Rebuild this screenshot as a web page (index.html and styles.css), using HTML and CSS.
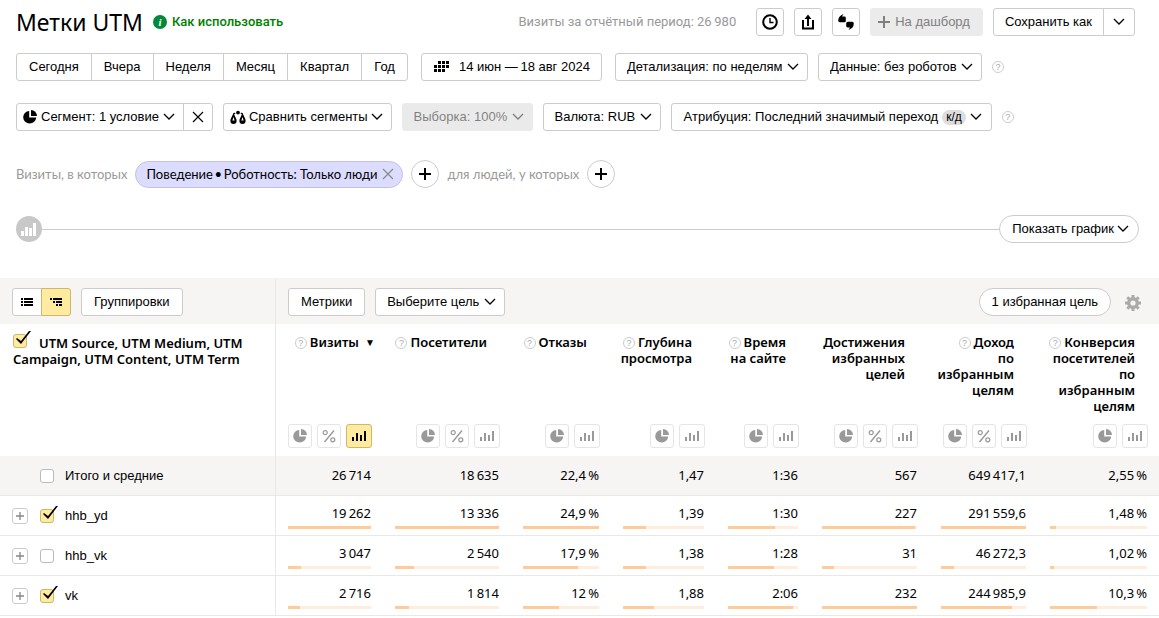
FILE: index.html
```html
<!DOCTYPE html>
<html lang="ru">
  <head>
    <meta charset="UTF-8" />
    <meta name="viewport" content="width=device-width, initial-scale=1.0" />
    <title>Метки UTM</title>
    <link rel="stylesheet" href="styles.css">
  </head>
  <body>
    <!-- Общие иконки -->
    <svg class="sprite" aria-hidden="true">
      <symbol id="chevron" viewBox="0 0 12 8">
        <path d="M1 1l5 5 5-5" fill="none" stroke="currentColor" stroke-width="1.3" />
      </symbol>
      <symbol id="pie" viewBox="0 0 14 14">
        <path d="M6.2 1v6.6h7a6.5 6.3 0 1 1-7-6.6z" fill="currentColor" />
        <path d="M8 0a6.2 6 0 0 1 6 5.9H8z" fill="currentColor" />
      </symbol>
      <symbol id="percent" viewBox="0 0 14 14">
        <path d="M2.5 13L12 1.5" stroke="currentColor" stroke-width="1.4" />
        <circle cx="3.2" cy="3.7" r="2" fill="none" stroke="currentColor" stroke-width="1.2" />
        <circle cx="10.8" cy="10.8" r="2" fill="none" stroke="currentColor" stroke-width="1.2" />
      </symbol>
      <symbol id="bars" viewBox="0 0 14 14">
        <path d="M0 8h2v4H0zM4 4h2v8H4zM8 6h2v6H8zM12 2h2v10h-2z" fill="currentColor" />
      </symbol>
      <symbol id="plus" viewBox="0 0 12 12">
        <path d="M6 0v12M0 6h12" stroke="currentColor" stroke-width="2" />
      </symbol>
      <symbol id="cross" viewBox="0 0 12 12">
        <path d="M1 1l10 10M11 1L1 11" stroke="currentColor" stroke-width="1.2" />
      </symbol>
    </svg>

    <!-- Шапка отчёта -->
    <header class="row header">
      <h1>Метки UTM</h1>
      <a href="#" class="howto"><i class="info">i</i>Как использовать</a>
      <span class="period-total">Визиты за отчётный период: 26&#8201;980</span>
      <button class="btn btn-icon" aria-label="История">
        <svg width="16" height="16" viewBox="0 0 16 16" fill="none" stroke="#000"><circle cx="8" cy="8" r="6.8" stroke-width="2" /><path d="M8 4v4.5h3.5" stroke-width="1.4" /></svg>
      </button>
      <button class="btn btn-icon" aria-label="Экспорт">
        <svg width="14" height="16" viewBox="0 0 14 16" fill="none" stroke="#000" stroke-width="2"><path d="M3 7H2v7.5h10V7h-1M7 12V3" /><path d="M3.6 5L7 .5 10.4 5z" fill="#000" stroke="none" /></svg>
      </button>
      <button class="btn btn-icon" aria-label="Комментарии">
        <svg width="16" height="16" viewBox="0 0 16 16"><path d="M5.500 0L4 2.600H6.300q1.500 0 1.500 1.400v2.800q0 1.500-1.500 1.500H1.800Q.2 8.300 .2 6.500 .2 2 5.500 0zM10.500 16l1.500-2.600H9.700q-1.500 0-1.500-1.400V9.200q0-1.500 1.500-1.500h4.500q1.600 0 1.600 1.800 0 4.500-5.300 6.500z" /></svg>
      </button>
      <button class="btn btn-muted" disabled><svg width="12" height="12"><use href="#plus" /></svg>На дашборд</button>
      <div class="group">
        <button class="btn">Сохранить как</button>
        <button class="btn btn-narrow" aria-label="Ещё варианты"><svg width="12" height="8"><use href="#chevron" /></svg></button>
      </div>
    </header>

    <!-- Период и детализация -->
    <div class="row row-period">
      <div class="group period">
        <button class="btn">Сегодня</button>
        <button class="btn">Вчера</button>
        <button class="btn">Неделя</button>
        <button class="btn">Месяц</button>
        <button class="btn">Квартал</button>
        <button class="btn">Год</button>
      </div>
      <button class="btn dates">
        <svg width="15" height="12" viewBox="0 0 15 12"><path d="M4 0h3v3H4zM8 0h3v3H8zM12 0h3v3h-3zM0 4h3v3H0zM4 4h3v3H4zM8 4h3v3H8zM12 4h3v3h-3zM0 8h3v3H0zM4 8h3v3H4zM8 8h3v3H8z" /></svg>
        14 июн —&#8201;18 авг 2024
      </button>
      <select class="btn select" aria-label="Детализация"><option>Детализация: по неделям</option></select>
      <select class="btn select" aria-label="Данные"><option>Данные: без роботов</option></select>
      <button class="help">?</button>
    </div>

    <!-- Сегменты -->
    <div class="row row-segment">
      <div class="group">
        <button class="btn btn-tight"><svg width="14" height="14"><use href="#pie" /></svg>Сегмент: 1 условие<svg width="12" height="8"><use href="#chevron" /></svg></button>
        <button class="btn btn-close" aria-label="Сбросить сегмент"><svg width="12" height="12"><use href="#cross" /></svg></button>
      </div>
      <button class="btn btn-tight compare">
        <svg width="16" height="15" viewBox="0 0 16 15"><path d="M3.500 3L.6 9.200Q-.4 14 3.500 14t2.900-4.800zm0 4l1.100 3.600H2.400zM12.500 3L9.600 9.200Q8.600 14 12.500 14t2.900-4.800zm0 4l1.100 3.600h-2.200z" fill-rule="evenodd" /><circle cx="8" cy="2.600" r="1.900" /><path d="M3.200 4.200L5.200 2.900M12.800 4.200L10.800 2.900" stroke="#000" stroke-width="1.200" /></svg>
        Сравнить сегменты
        <svg width="12" height="8"><use href="#chevron" /></svg>
      </button>
      <select class="btn select" aria-label="Выборка" disabled><option>Выборка: 100%</option></select>
      <select class="btn select" aria-label="Валюта"><option>Валюта: RUB</option></select>
      <button class="btn attribution">Атрибуция: Последний значимый переход<span class="badge">к/д</span><svg width="12" height="8"><use href="#chevron" /></svg></button>
      <button class="help">?</button>
    </div>

    <!-- Условия -->
    <div class="row row-filter">
      <span>Визиты, в которых</span>
      <button class="chip">Поведение&#8201;•&#8201;Роботность: Только люди<svg width="12" height="12"><use href="#cross" /></svg></button>
      <button class="round" aria-label="Добавить условие для визитов"><svg width="12" height="12"><use href="#plus" /></svg></button>
      <span>для людей, у которых</span>
      <button class="round" aria-label="Добавить условие для людей"><svg width="12" height="12"><use href="#plus" /></svg></button>
    </div>

    <div class="chart-toggle">
      <span class="chart-icon"><svg width="16" height="14" viewBox="0 0 16 14" fill="#fff"><path d="M0 9h3v5H0zM4 5h3v9H4zM8 6h3v8H8zM12 1h3v13h-3z" /></svg></span>
      <span class="line"></span>
      <button class="btn pill">Показать график<svg width="12" height="8"><use href="#chevron" /></svg></button>
    </div>

    <!-- Таблица -->
    <table>
      <colgroup>
        <col class="c-name" /><col class="c-visits" /><col class="c-users" /><col class="c-bounce" /><col class="c-depth" /><col class="c-time" /><col class="c-goals" /><col class="c-income" /><col class="c-conv" />
      </colgroup>
      <thead>
        <tr class="tools">
          <td>
            <div class="toolbar">
              <div class="group">
                <button class="btn btn-view" aria-label="Список"><svg width="12" height="9" viewBox="0 0 12 9"><path d="M0 0h2v2H0zM3 0h9v2H3zM0 3h2v2H0zM3 3h9v2H3zM0 6h2v2H0zM3 6h9v2H3z" /></svg></button>
                <button class="btn btn-view active" aria-label="Дерево"><svg width="12" height="9" viewBox="0 0 12 9"><path d="M0 0h2v2H0zM3 0h9v2H3zM3 3h2v2H3zM6 3h6v2H6zM6 6h2v2H6zM9 6h3v2H9z" /></svg></button>
              </div>
              <button class="btn">Группировки</button>
            </div>
          </td>
          <td colspan="8">
            <div class="toolbar">
              <button class="btn">Метрики</button>
              <select class="btn select" aria-label="Цель"><option>Выберите цель</option></select>
              <button class="btn pill goals">1 избранная цель</button>
              <button class="gear" aria-label="Настройки">
                <svg width="16" height="16" viewBox="0 0 16 16" fill="none" stroke="#aaa"><circle cx="8" cy="8" r="4.300" stroke-width="3.400" /><path d="M8 0v3M8 13v3M0 8h3M13 8h3M2.300 2.300l2 2M11.700 11.700l2 2M2.300 13.700l2-2M11.700 4.300l2-2" stroke-width="3" /></svg>
              </button>
            </div>
          </td>
        </tr>
        <tr class="labels">
          <th rowspan="2"><input type="checkbox" aria-label="Выбрать все" checked />UTM Source, UTM Medium, UTM Campaign, UTM Content, UTM Term</th>
          <th class="sorted"><button class="help">?</button>Визиты<span class="arrow">▼</span></th>
          <th><button class="help">?</button>Посетители</th>
          <th><button class="help">?</button>Отказы</th>
          <th><button class="help">?</button>Глубина<br />просмотра</th>
          <th><button class="help">?</button>Время<br />на сайте</th>
          <th>Достижения<br />избранных<br />целей</th>
          <th><button class="help">?</button>Доход<br />по<br />избранным<br />целям</th>
          <th><button class="help">?</button>Конверсия<br />посетителей<br />по<br />избранным<br />целям</th>
        </tr>
        <tr class="modes">
          <td><div class="mode-list">
            <button class="mode" aria-label="Доли"><svg width="14" height="14"><use href="#pie" /></svg></button>
            <button class="mode" aria-label="Проценты"><svg width="14" height="14"><use href="#percent" /></svg></button>
            <button class="mode mode-bars active" aria-label="Столбцы"><svg width="14" height="14"><use href="#bars" /></svg></button>
          </div></td>
          <td><div class="mode-list">
            <button class="mode" aria-label="Доли"><svg width="14" height="14"><use href="#pie" /></svg></button>
            <button class="mode" aria-label="Проценты"><svg width="14" height="14"><use href="#percent" /></svg></button>
            <button class="mode mode-bars" aria-label="Столбцы"><svg width="14" height="14"><use href="#bars" /></svg></button>
          </div></td>
          <td><div class="mode-list">
            <button class="mode" aria-label="Доли"><svg width="14" height="14"><use href="#pie" /></svg></button>
            <button class="mode mode-bars" aria-label="Столбцы"><svg width="14" height="14"><use href="#bars" /></svg></button>
          </div></td>
          <td><div class="mode-list">
            <button class="mode" aria-label="Доли"><svg width="14" height="14"><use href="#pie" /></svg></button>
            <button class="mode mode-bars" aria-label="Столбцы"><svg width="14" height="14"><use href="#bars" /></svg></button>
          </div></td>
          <td><div class="mode-list">
            <button class="mode" aria-label="Доли"><svg width="14" height="14"><use href="#pie" /></svg></button>
            <button class="mode mode-bars" aria-label="Столбцы"><svg width="14" height="14"><use href="#bars" /></svg></button>
          </div></td>
          <td><div class="mode-list">
            <button class="mode" aria-label="Доли"><svg width="14" height="14"><use href="#pie" /></svg></button>
            <button class="mode" aria-label="Проценты"><svg width="14" height="14"><use href="#percent" /></svg></button>
            <button class="mode mode-bars" aria-label="Столбцы"><svg width="14" height="14"><use href="#bars" /></svg></button>
          </div></td>
          <td><div class="mode-list">
            <button class="mode" aria-label="Доли"><svg width="14" height="14"><use href="#pie" /></svg></button>
            <button class="mode" aria-label="Проценты"><svg width="14" height="14"><use href="#percent" /></svg></button>
            <button class="mode mode-bars" aria-label="Столбцы"><svg width="14" height="14"><use href="#bars" /></svg></button>
          </div></td>
          <td><div class="mode-list">
            <button class="mode" aria-label="Доли"><svg width="14" height="14"><use href="#pie" /></svg></button>
            <button class="mode mode-bars" aria-label="Столбцы"><svg width="14" height="14"><use href="#bars" /></svg></button>
          </div></td>
        </tr>
      </thead>
      <tbody>
        <tr class="total">
          <td><label class="name"><input type="checkbox" />Итого и средние</label></td>
          <td>26&#8201;714</td>
          <td>18&#8201;635</td>
          <td>22,4&#8201;%</td>
          <td>1,47</td>
          <td>1:36</td>
          <td>567</td>
          <td>649&#8201;417,1</td>
          <td>2,55&#8201;%</td>
        </tr>
        <tr>
          <td><div class="name"><button class="expand" aria-label="Раскрыть"><svg width="8" height="8" viewBox="0 0 12 12"><use href="#plus" /></svg></button><label><input type="checkbox" checked />hhb_yd</label></div></td>
          <td>19&#8201;262<div class="bar"><div style="width: 100%"></div></div></td>
          <td>13&#8201;336<div class="bar"><div style="width: 100%"></div></div></td>
          <td>24,9&#8201;%<div class="bar"><div style="width: 100%"></div></div></td>
          <td>1,39<div class="bar"><div style="width: 28%"></div></div></td>
          <td>1:30<div class="bar"><div style="width: 67%"></div></div></td>
          <td>227<div class="bar"><div style="width: 98%"></div></div></td>
          <td>291&#8201;559,6<div class="bar"><div style="width: 100%"></div></div></td>
          <td>1,48&#8201;%<div class="bar"><div style="width: 6%"></div></div></td>
        </tr>
        <tr>
          <td><div class="name"><button class="expand" aria-label="Раскрыть"><svg width="8" height="8" viewBox="0 0 12 12"><use href="#plus" /></svg></button><label><input type="checkbox" />hhb_vk</label></div></td>
          <td>3&#8201;047<div class="bar"><div style="width: 16%"></div></div></td>
          <td>2&#8201;540<div class="bar"><div style="width: 18%"></div></div></td>
          <td>17,9&#8201;%<div class="bar"><div style="width: 72%"></div></div></td>
          <td>1,38<div class="bar"><div style="width: 28%"></div></div></td>
          <td>1:28<div class="bar"><div style="width: 66%"></div></div></td>
          <td>31<div class="bar"><div style="width: 13%"></div></div></td>
          <td>46&#8201;272,3<div class="bar"><div style="width: 15%"></div></div></td>
          <td>1,02&#8201;%<div class="bar"><div style="width: 4%"></div></div></td>
        </tr>
        <tr>
          <td><div class="name"><button class="expand" aria-label="Раскрыть"><svg width="8" height="8" viewBox="0 0 12 12"><use href="#plus" /></svg></button><label><input type="checkbox" checked />vk</label></div></td>
          <td>2&#8201;716<div class="bar"><div style="width: 14%"></div></div></td>
          <td>1&#8201;814<div class="bar"><div style="width: 13%"></div></div></td>
          <td>12&#8201;%<div class="bar"><div style="width: 47%"></div></div></td>
          <td>1,88<div class="bar"><div style="width: 38%"></div></div></td>
          <td>2:06<div class="bar"><div style="width: 93%"></div></div></td>
          <td>232<div class="bar"><div style="width: 100%"></div></div></td>
          <td>244&#8201;985,9<div class="bar"><div style="width: 84%"></div></div></td>
          <td>10,3&#8201;%<div class="bar"><div style="width: 48%"></div></div></td>
        </tr>
      </tbody>
    </table>
  </body>
</html>
```

FILE: styles.css
```css
/* ======= Переменные ======= */
:root {
  --font-text: "Noto Sans", sans-serif;
  --font-label: Roboto, "Noto Sans", sans-serif;
  --font-filter: Lato, "Noto Sans", sans-serif;
  --font-control: "Liberation Sans", Arial, sans-serif;
  --color-border: #ccc;
  --color-row: #e8e8e8;
  --color-panel: #f6f5f3;
  --color-muted: #999;
  --color-active: #ffeba0;
  --color-active-border: #ccb86a;
}

/* ======= Глобальные стили ======= */
* {
  box-sizing: border-box;
  margin: 0;
  padding: 0;
}

body {
  font-family: var(--font-text);
  font-size: 13px;
  line-height: 18px;
  color: #000;
  background: #fff;
}

svg {
  flex: none;
  display: block;
}

.sprite {
  position: absolute;
  width: 0;
  height: 0;
}

button,
select {
  font: 13px/18px var(--font-control);
  color: #000;
  cursor: pointer;
}

/* ======= Кнопки ======= */
.btn {
  display: inline-flex;
  align-items: center;
  justify-content: center;
  height: 28px;
  padding: 0 12px;
  border: 1px solid var(--color-border);
  border-radius: 3px;
  background: #fff;
  white-space: nowrap;
}

.btn-icon {
  width: 28px;
  padding: 0;
}

.btn-muted {
  gap: 5px;
  padding: 0 12px 0 7px;
  border-color: #ebebeb;
  background: #ebebeb;
  color: #808080;
}

.header .group .btn {
  padding: 0 11px;
}

.header .group .btn-narrow {
  padding: 0 9px;
}

.btn-close {
  padding: 0 8px;
}

.btn-tight {
  gap: 4px;
  padding: 0 8px 0 6px;
}

.compare {
  gap: 3px;
}

.select {
  appearance: none;
  padding: 0 24px 0 11px;
  background: #fff url("data:image/svg+xml,%3Csvg xmlns='http://www.w3.org/2000/svg' width='12' height='8'%3E%3Cpath d='M1 1l5 5 5-5' fill='none' stroke='black' stroke-width='1.3'/%3E%3C/svg%3E") no-repeat right 8px center;
}

.select:disabled {
  border-color: #d6d6d6;
  background-color: #d6d6d6;
  color: #000;
  opacity: 0.5;
}

.pill {
  gap: 3px;
  border-radius: 14px;
}

.group {
  display: flex;
}

.group .btn:not(:first-child) {
  margin-left: -1px;
  border-top-left-radius: 0;
  border-bottom-left-radius: 0;
}

.group .btn:not(:last-child) {
  border-top-right-radius: 0;
  border-bottom-right-radius: 0;
}

.btn.active,
.mode.active {
  border-color: var(--color-active-border);
  background: var(--color-active);
  color: #000;
}

.help {
  width: 12px;
  height: 12px;
  border: 1px solid #ccc;
  border-radius: 50%;
  background: #fff;
  color: #aaa;
  font-size: 9px;
  line-height: 10px;
  text-align: center;
}

/* ======= Шапка ======= */
.row {
  display: flex;
  align-items: center;
  gap: 10px;
  padding: 0 24px 0 16px;
}

.header {
  padding-top: 8px;
}

h1 {
  font-size: 23px;
  line-height: 28px;
  font-weight: normal;
}

.howto {
  display: flex;
  align-items: center;
  gap: 5px;
  color: #008000;
  font-family: var(--font-label);
  font-weight: 500;
  text-decoration: none;
}

.info {
  width: 14px;
  height: 14px;
  border-radius: 50%;
  background: #00893a;
  color: #fff;
  font: italic bold 11px/14px "Liberation Serif", serif;
  text-align: center;
}

.period-total {
  margin: 0 10px 0 auto;
  font-family: var(--font-label);
  color: var(--color-muted);
}

/* ======= Фильтры ======= */
.row-period {
  margin-top: 17px;
}

.period,
.dates {
  margin-right: 3px;
}

.dates {
  gap: 10px;
  padding: 0 11px 0 12px;
}

.row-segment {
  margin-top: 22px;
}

.attribution {
  gap: 4px;
  padding: 0 9px 0 12px;
}

.badge {
  padding: 0 4px;
  border-radius: 8px;
  background: #ddd;
  font-size: 12px;
  line-height: 15px;
}

.row-filter {
  margin-top: 29px;
  gap: 8px;
  font-family: var(--font-filter);
  color: var(--color-muted);
}

.chip {
  display: flex;
  align-items: center;
  gap: 5px;
  height: 27px;
  padding: 0 8px 0 10px;
  border: 1px solid #c3bfe8;
  border-radius: 14px;
  background: #dcdcff;
  font-family: var(--font-filter);
}

.chip svg {
  color: #888;
}

.round {
  display: flex;
  align-items: center;
  justify-content: center;
  width: 28px;
  height: 28px;
  border: 1px solid var(--color-border);
  border-radius: 50%;
  background: #fff;
}

.chart-toggle {
  display: flex;
  align-items: center;
  margin: 27px 20px 35px 16px;
}

.chart-icon {
  display: flex;
  align-items: center;
  justify-content: center;
  width: 26px;
  height: 26px;
  border-radius: 50%;
  background: #c8c8c8;
}

.line {
  flex: 1;
  height: 1px;
  background: var(--color-border);
}

.chart-toggle .btn {
  padding: 0 9px 0 12px;
}

/* ======= Таблица ======= */
table {
  width: 100%;
  table-layout: fixed;
  border-collapse: separate;
  border-spacing: 0;
}

.c-name { width: 276px; }
.c-visits { width: 107px; }
.c-users { width: 128px; }
.c-bounce { width: 100px; }
.c-depth { width: 105px; }
.c-time { width: 94px; }
.c-goals { width: 119px; }
.c-income { width: 109px; }
.c-conv { width: 121px; }

tbody td:first-child,
.tools td:first-child,
.labels th:first-child {
  border-right: 1px solid var(--color-row);
}

.tools td {
  background: var(--color-panel);
}

.toolbar {
  display: flex;
  align-items: center;
  gap: 10px;
  padding: 10px 12px 8px;
}

.btn-view {
  padding: 0 8px;
}

.goals {
  margin-left: auto;
}

.gear {
  margin: 2px 6px 0 4px;
  border: none;
  background: none;
}

th {
  padding: 10px 24px 10px 0;
  font-weight: 600;
  line-height: 16px;
  text-align: right;
  vertical-align: top;
}

th .help {
  margin-right: 3px;
  vertical-align: 1px;
}

.labels th:first-child {
  padding: 10px 24px 10px 13px;
  text-align: left;
}

th input {
  margin-right: 12px;
}

.sorted {
  position: relative;
}

.arrow {
  position: absolute;
  right: 8px;
  font-size: 10px;
}

.mode-list {
  display: flex;
  justify-content: flex-end;
  gap: 5px;
  padding: 0 11px 8px 0;
}

.mode {
  display: flex;
  align-items: center;
  justify-content: center;
  width: 24px;
  height: 24px;
  border: 1px solid #e5e5e5;
  border-radius: 3px;
  background: #fff;
  color: var(--color-muted);
}

.mode-bars {
  width: 26px;
}

tbody td {
  padding: 8px 12px 6px;
  border-bottom: 1px solid var(--color-row);
  text-align: right;
  vertical-align: top;
}

tbody td:first-child {
  padding: 0;
}

.total td {
  padding-top: 10px;
  background: var(--color-panel);
}

.name {
  display: flex;
  align-items: center;
  gap: 12px;
  height: 39px;
  padding: 1px 12px 0;
  font-family: var(--font-control);
}

.total .name {
  padding-left: 40px;
}

.name label {
  display: flex;
  align-items: center;
}

.name input {
  margin-right: 11px;
}

.total .name input {
  margin-right: -1px;
}

.expand {
  display: flex;
  align-items: center;
  justify-content: center;
  width: 16px;
  height: 16px;
  border: 1px solid var(--color-border);
  border-radius: 3px;
  background: #fff;
  color: #888;
}

.bar {
  height: 3px;
  margin-top: 4px;
  background: #ffeedd;
}

.bar div {
  height: 3px;
  background: #ffcc99;
}

/* ======= Флажки ======= */
input[type="checkbox"] {
  appearance: none;
  position: relative;
  width: 14px;
  height: 14px;
  border: 1px solid #bbb;
  border-radius: 3px;
  background: #fff;
}

input[type="checkbox"]:checked {
  border-color: var(--color-active-border);
  background: var(--color-active);
}

input[type="checkbox"]:checked::after {
  content: "";
  position: absolute;
  left: 2px;
  top: -4px;
  width: 15px;
  height: 14px;
  background: #000;
  clip-path: polygon(0 8px, 1px 7px, 5px 10px, 13px 0, 15px 0, 5px 13px);
}
```
